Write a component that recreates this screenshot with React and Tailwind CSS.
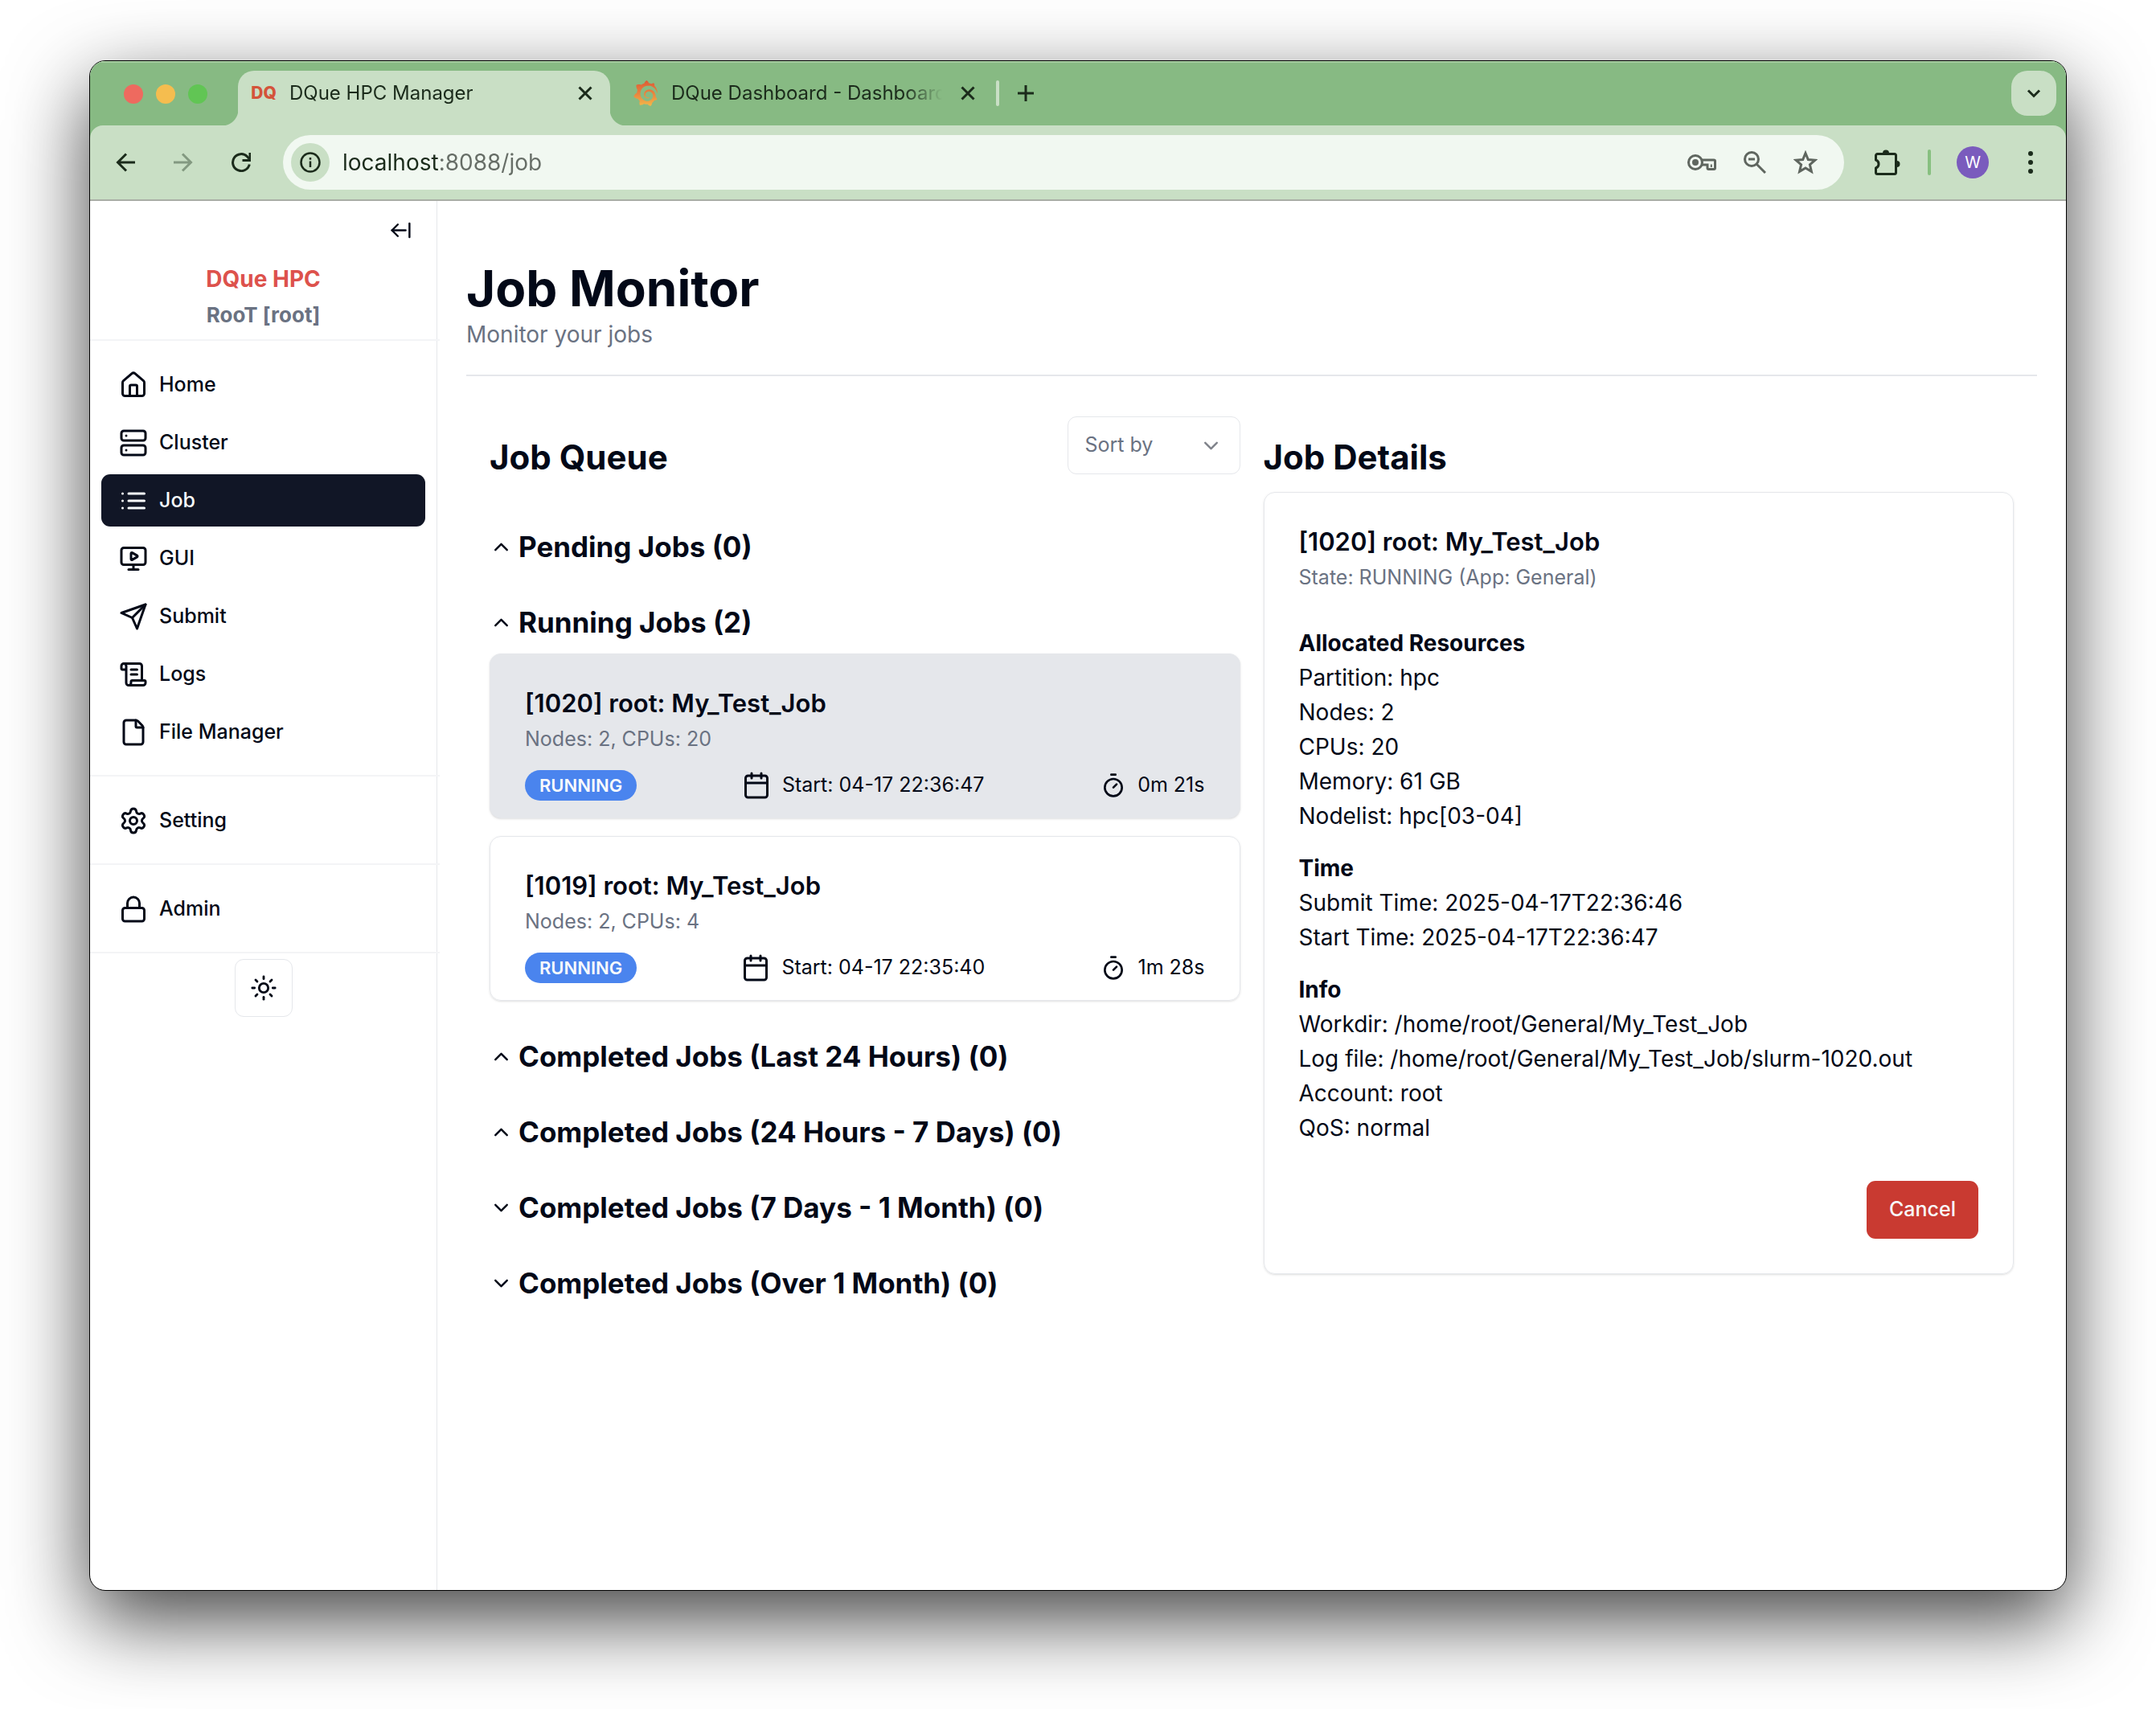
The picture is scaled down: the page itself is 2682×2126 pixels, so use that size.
import {
  ArrowLeftFromLine,
  Calendar,
  ChevronDown,
  ChevronUp,
  File,
  House,
  Lock,
  MonitorPlay,
  ScrollText,
  Server,
  Settings,
  Sun,
  Timer,
} from "lucide-react";
import { SiGrafana } from "react-icons/si";

function Stroke({ children, className, width = 2, ...rest }) {
  return (
    <svg
      viewBox="0 0 24 24"
      fill="none"
      stroke="currentColor"
      strokeWidth={width}
      strokeLinecap="round"
      strokeLinejoin="round"
      className={className}
      aria-hidden="true"
      {...rest}
    >
      {children}
    </svg>
  );
}

const ListIcon = ({ className }) => (
  <Stroke className={className}>
    <path d="M8 6h13M8 12h13M8 18h13M3 6h.01M3 12h.01M3 18h.01" />
  </Stroke>
);

const SendIcon = ({ className }) => (
  <Stroke className={className}>
    <path d="m22 2-7 20-4-9-9-4Z" />
    <path d="M22 2 11 13" />
  </Stroke>
);

const CloseIcon = () => (
  <Stroke className="size-6" width={3} strokeLinecap="butt">
    <path d="m4.500 4.500 15 15M19.500 4.500l-15 15" />
  </Stroke>
);

const KeyIcon = () => (
  <svg viewBox="0 0 36 20" fill="none" stroke="currentColor" strokeWidth="3" className="h-5 w-9" aria-hidden="true">
    <circle cx="10" cy="10" r="8.500" />
    <circle cx="10" cy="10" r="4" fill="currentColor" stroke="none" />
    <path d="M18 7h15a1.500 1.500 0 0 1 1.500 1.500V17a1.500 1.500 0 0 1-1.500 1.500h-6.500A1.500 1.500 0 0 1 25 17v-4h-7" />
    <path d="M29.800 12.500v3.500" strokeWidth="2" />
  </svg>
);

const ZoomOutIcon = () => (
  <svg viewBox="0 0 28 28" fill="none" stroke="currentColor" strokeWidth="3" className="size-7" aria-hidden="true">
    <circle cx="10" cy="10" r="8.500" />
    <path d="M6 10h8M16 16l11 11" />
  </svg>
);

const StarIcon = () => (
  <svg viewBox="0 0 30 30" fill="none" stroke="currentColor" strokeWidth="3" className="size-[30px]" aria-hidden="true">
    <path d="M15 3.500l3.300 8 8.700.700-6.600 5.700 2 8.500L15 21.900l-7.400 4.500 2-8.500L3 12.200l8.700-.700z" />
  </svg>
);

const PuzzleIcon = () => (
  <svg viewBox="0 0 32 32" fill="none" stroke="currentColor" strokeWidth="3" className="size-8" aria-hidden="true">
    <path d="M1.500 13V7.500a2 2 0 0 1 2-2h21a2 2 0 0 1 2 2v21a2 2 0 0 1-2 2h-21a2 2 0 0 1-2-2V23a5.300 5.300 0 0 0 0-10z" strokeLinejoin="round" />
    <path d="M10 4.500a4 4 0 0 1 8 0zM27.500 14a4 4 0 0 1 0 8z" fill="currentColor" stroke="none" />
  </svg>
);

function Tab({ icon, title, active }) {
  return (
    <div
      className={
        active
          ? "relative flex h-[68px] w-[463px] items-center rounded-t-[20px] bg-[#c9dfc5] pb-3 pl-4 pr-[19px] before:absolute before:-left-5 before:bottom-0 before:size-5 before:bg-[radial-gradient(circle_at_0_0,transparent_20px,#c9dfc5_21px)] after:absolute after:-right-5 after:bottom-0 after:size-5 after:bg-[radial-gradient(circle_at_100%_0,transparent_20px,#c9dfc5_21px)]"
          : "relative flex h-[68px] w-[480px] items-center pb-3 pl-7 pr-[23px]"
      }
    >
      <span className="flex w-8 shrink-0 justify-center">{icon}</span>
      <span className="ml-4 flex-1 overflow-hidden whitespace-nowrap text-[24px] leading-8 text-[#1b2b1b] [mask-image:linear-gradient(90deg,#000_calc(100%-48px),transparent)]">
        {title}
      </span>
      <button type="button" aria-label={`Close ${title}`} className="ml-5 text-[#1b2b1b]">
        <CloseIcon />
      </button>
    </div>
  );
}

function TabStrip() {
  return (
    <div className="flex h-20 items-end bg-[#87ba83] pr-3 shadow-[inset_0_2px_0_#a4cc9f]">
      <div className="mb-[27px] ml-[42px] mr-[38px] flex gap-4">
        <button type="button" aria-label="Close window" className="size-6 rounded-full bg-[#ee6a5f]" />
        <button type="button" aria-label="Minimize window" className="size-6 rounded-full bg-[#f5bd4f]" />
        <button type="button" aria-label="Zoom window" className="size-6 rounded-full bg-[#61c554]" />
      </div>
      <Tab active title="DQue HPC Manager" icon={<span className="text-[21px] font-extrabold text-[#d4533a]">DQ</span>} />
      <Tab
        title="DQue Dashboard - Dashboards"
        icon={<SiGrafana fill="url(#grafana)" className="size-8" aria-hidden="true" />}
      />
      <svg className="size-0" aria-hidden="true">
        <linearGradient id="grafana" x1="0" y1="0" x2="0" y2="1">
          <stop offset="0" stopColor="#dc5a35" />
          <stop offset="0.500" stopColor="#e8833f" />
          <stop offset="1" stopColor="#f2b84a" />
        </linearGradient>
      </svg>
      <div className="mb-6 h-8 w-1 rounded-full bg-[#c9dfc5]" />
      <button type="button" aria-label="New tab" className="mb-6 ml-[17px] p-1 text-[#1b2b1b]">
        <Stroke className="size-6" width={3} strokeLinecap="butt">
          <path d="M12 2v20M2 12h20" />
        </Stroke>
      </button>
      <button
        type="button"
        aria-label="Search tabs"
        className="mb-3 ml-auto flex size-14 items-center justify-center rounded-[20px] bg-[#c9dfc5] text-[#1b2b1b]"
      >
        <Stroke className="size-6" width={3} strokeLinecap="butt" strokeLinejoin="miter">
          <path d="m5 8.500 7 7 7-7" />
        </Stroke>
      </button>
    </div>
  );
}

function Toolbar() {
  return (
    <div className="bg-[#87ba83]">
      <div className="flex h-[94px] items-center rounded-t-2xl border-b-2 border-[#a9aea6] bg-[#c9dfc5] pl-7 pr-7 text-[#1b2b1b]">
        <button type="button" aria-label="Back" className="p-1">
          <Stroke className="size-6" width={3} strokeLinecap="butt" strokeLinejoin="miter">
            <path d="M24 12H2.500M13 1.500 2.500 12 13 22.500" />
          </Stroke>
        </button>
        <button type="button" aria-label="Forward" className="ml-10 p-1 text-[#839981]">
          <Stroke className="size-6" width={3} strokeLinecap="butt" strokeLinejoin="miter">
            <path d="M0 12h21.500M11 1.500 21.500 12 11 22.500" />
          </Stroke>
        </button>
        <button type="button" aria-label="Reload" className="ml-10 p-1">
          <Stroke className="size-6" width={3} strokeLinecap="butt" strokeLinejoin="miter">
            <path d="M22.300 14.500A10.500 10.500 0 1 1 19.500 4.700L22 7.500" />
            <path d="M23 0v9.500h-9.500" />
          </Stroke>
        </button>
        <div className="ml-9 flex h-[68px] flex-1 items-center rounded-full bg-[#f1f8f1] pl-[10px] pr-[33px] text-[#5f665f]">
          <button
            type="button"
            aria-label="View site information"
            className="flex size-12 items-center justify-center rounded-full bg-[#c9dfc5] text-[#1b2b1b]"
          >
            <svg viewBox="0 0 26 26" fill="none" stroke="currentColor" strokeWidth="2.500" className="size-[26px]" aria-hidden="true">
              <circle cx="13" cy="13" r="11.500" />
              <path d="M13 11.500v7.500M13 7v2.700" />
            </svg>
          </button>
          <input
            type="text"
            aria-label="Address"
            defaultValue="localhost:8088/job"
            className="ml-4 min-w-0 flex-1 bg-[linear-gradient(90deg,#1b2b1b_120px,#666d66_120px)] bg-clip-text text-[28px] leading-10 text-transparent outline-none"
          />
          <div className="flex items-center gap-[34px]">
            <button type="button" aria-label="Passwords"><KeyIcon /></button>
            <button type="button" aria-label="Zoom level"><ZoomOutIcon /></button>
            <button type="button" aria-label="Bookmark"><StarIcon /></button>
          </div>
        </div>
        <button type="button" aria-label="Extensions" className="ml-[38px]">
          <PuzzleIcon />
        </button>
        <div className="ml-[34px] h-8 w-1 rounded-full bg-[#87c080]" />
        <button
          type="button"
          aria-label="Profile"
          className="ml-8 flex size-10 items-center justify-center rounded-full bg-[#7a5bbd] text-xl text-white"
        >
          W
        </button>
        <button type="button" aria-label="Menu" className="ml-9">
          <svg viewBox="0 0 32 32" fill="currentColor" className="size-8" aria-hidden="true">
            <circle cx="16" cy="5" r="3" />
            <circle cx="16" cy="16" r="3" />
            <circle cx="16" cy="27" r="3" />
          </svg>
        </button>
      </div>
    </div>
  );
}

function NavItem({ icon: Icon, label, active }) {
  return (
    <a
      href="#"
      aria-current={active ? "page" : undefined}
      className={
        active
          ? "flex h-[65px] items-center gap-[14px] rounded-[11px] bg-[#111626] px-[22px] text-[25px] font-medium text-slate-50"
          : "flex h-[65px] items-center gap-[14px] rounded-[11px] px-[22px] text-[25px] font-medium"
      }
    >
      <Icon className="size-9" aria-hidden="true" />
      {label}
    </a>
  );
}

const navGroups = [
  [
    { icon: House, label: "Home" },
    { icon: Server, label: "Cluster" },
    { icon: ListIcon, label: "Job", active: true },
    { icon: MonitorPlay, label: "GUI" },
    { icon: SendIcon, label: "Submit" },
    { icon: ScrollText, label: "Logs" },
    { icon: File, label: "File Manager" },
  ],
  [{ icon: Settings, label: "Setting" }],
  [{ icon: Lock, label: "Admin" }],
];

function Sidebar() {
  return (
    <aside className="w-[432px] shrink-0 border-r border-gray-200">
      <div className="flex h-[72px] items-center justify-end pr-[30px]">
        <button type="button" aria-label="Collapse sidebar">
          <ArrowLeftFromLine className="size-[29px]" />
        </button>
      </div>
      <div className="-mr-1 border-b-2 border-gray-100 pb-3 pr-1 pt-1 text-center font-bold">
        <div className="text-[28px] leading-[43px] text-[#dd524c]">DQue HPC</div>
        <div className="mt-[5px] text-[26px] leading-9 text-gray-500">RooT [root]</div>
      </div>
      <nav>
        {navGroups.map((group, i) => (
          <div key={i} className="-mr-1 border-b-2 border-gray-100 pb-[21px] pl-[14px] pr-[18px] pt-[22px]">
            <div className="flex flex-col gap-[7px]">
              {group.map((item) => (
                <NavItem key={item.label} {...item} />
              ))}
            </div>
          </div>
        ))}
      </nav>
      <button
        type="button"
        aria-label="Toggle theme"
        className="mx-auto mt-[7px] flex size-[72px] items-center justify-center rounded-[11px] border border-gray-200"
      >
        <Sun className="size-[34px]" />
      </button>
    </aside>
  );
}

function Section({ title, open, children }) {
  const Icon = open ? ChevronUp : ChevronDown;
  return (
    <section>
      <h3>
        <button type="button" aria-expanded={open} className="flex items-center gap-[7px] text-[35px] font-bold leading-[50px]">
          <Icon className="size-[29px]" aria-hidden="true" />
          {title}
        </button>
      </h3>
      {children}
    </section>
  );
}

function JobCard({ id, cpus, start, elapsed, selected }) {
  return (
    <article
      className={
        selected
          ? "rounded-[14px] border border-gray-200 bg-[#e5e7eb] px-[43px] pb-[21px] pt-[45px] shadow-sm"
          : "rounded-[14px] border border-gray-200 px-[43px] pb-[21px] pt-[45px] shadow-sm"
      }
    >
      <h4 className="text-[31px] font-semibold leading-8">[{id}] root: My_Test_Job</h4>
      <p className="mt-[10px] text-[25px] leading-9 text-gray-500">Nodes: 2, CPUs: {cpus}</p>
      <div className="mt-[21px] flex h-[38px] items-center justify-between text-[25px]">
        <span className="flex h-[38px] items-center rounded-full bg-[#4a84ee] px-[18px] text-[22px] font-semibold text-slate-50">
          RUNNING
        </span>
        <span className="flex items-center gap-[14px]">
          <Calendar className="size-9" aria-hidden="true" />
          Start: {start}
        </span>
        <span className="flex items-center gap-[14px] pl-[14px]">
          <Timer className="size-8" aria-hidden="true" />
          {elapsed}
        </span>
      </div>
    </article>
  );
}

const detailGroups = [
  ["Allocated Resources", ["Partition: hpc", "Nodes: 2", "CPUs: 20", "Memory: 61 GB", "Nodelist: hpc[03-04]"]],
  ["Time", ["Submit Time: 2025-04-17T22:36:46", "Start Time: 2025-04-17T22:36:47"]],
  [
    "Info",
    [
      "Workdir: /home/root/General/My_Test_Job",
      "Log file: /home/root/General/My_Test_Job/slurm-1020.out",
      "Account: root",
      "QoS: normal",
    ],
  ],
];

function JobQueue() {
  return (
    <div>
      <div className="flex h-20 items-start justify-between">
        <h2 className="self-end text-[42px] font-bold leading-[58px]">Job Queue</h2>
        <div className="relative w-[215px]">
          <select
            aria-label="Sort by"
            defaultValue=""
            className="h-[72px] w-full appearance-none rounded-[11px] border border-gray-200 bg-white px-[21px] text-[25px] text-gray-500"
          >
            <option value="">Sort by</option>
            <option value="id">Job ID</option>
            <option value="time">Time</option>
          </select>
          <ChevronDown className="pointer-events-none absolute right-[22px] top-[22px] size-[29px] opacity-50" aria-hidden="true" />
        </div>
      </div>
      <div className="mt-[57px] flex flex-col gap-11">
        <Section title="Pending Jobs (0)" open />
        <Section title="Running Jobs (2)" open>
          <div className="mt-[14px] flex flex-col gap-[22px]">
            <JobCard id="1020" cpus="20" start="04-17 22:36:47" elapsed="0m 21s" selected />
            <JobCard id="1019" cpus="4" start="04-17 22:35:40" elapsed="1m 28s" />
          </div>
        </Section>
        <Section title="Completed Jobs (Last 24 Hours) (0)" open />
        <Section title="Completed Jobs (24 Hours - 7 Days) (0)" open />
        <Section title="Completed Jobs (7 Days - 1 Month) (0)" open={false} />
        <Section title="Completed Jobs (Over 1 Month) (0)" open={false} />
      </div>
    </div>
  );
}

function JobDetails() {
  return (
    <div className="pt-[22px]">
      <h2 className="text-[42px] font-bold leading-[58px]">Job Details</h2>
      <article className="mt-[14px] rounded-[14px] border border-gray-200 px-[43px] pb-[43px] pt-[45px] shadow-sm">
        <h3 className="text-[31px] font-semibold leading-8">[1020] root: My_Test_Job</h3>
        <p className="mt-[10px] text-[25px] leading-9 text-gray-500">State: RUNNING (App: General)</p>
        <div className="mt-[43px] flex flex-col gap-[22px] text-[28px] leading-[43px]">
          {detailGroups.map(([title, lines]) => (
            <div key={title}>
              <h4 className="font-bold">{title}</h4>
              {lines.map((line) => (
                <p key={line}>{line}</p>
              ))}
            </div>
          ))}
        </div>
        <div className="mt-11 flex justify-end">
          <button type="button" className="h-[72px] rounded-[11px] bg-[#c93a31] px-7 text-[25px] font-medium text-slate-50">
            Cancel
          </button>
        </div>
      </article>
    </div>
  );
}

export default function App() {
  return (
    <div className="flex min-h-screen bg-white px-[111px] pb-[147px] pt-[75px] font-['Inter','Liberation_Sans',sans-serif] text-[#020817]">
      <div className="flex min-w-0 flex-1 flex-col overflow-hidden rounded-[20px] border border-black bg-white shadow-[0_36px_100px_rgba(0,0,0,0.740)]">
        <TabStrip />
        <Toolbar />
        <div className="flex flex-1">
          <Sidebar />
          <main className="min-w-0 flex-1 px-9 pt-[73px]">
            <h1 className="text-[62px] font-bold leading-[72px]">Job Monitor</h1>
            <p className="text-[28px] leading-[43px] text-gray-500">Monitor your jobs</p>
            <hr className="mt-7 border-t-2 border-gray-200" />
            <div className="mt-[50px] grid grid-cols-2 gap-[29px] px-[29px]">
              <JobQueue />
              <JobDetails />
            </div>
          </main>
        </div>
      </div>
    </div>
  );
}
